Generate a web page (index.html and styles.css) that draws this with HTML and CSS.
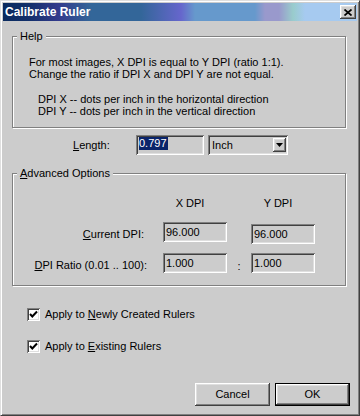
FILE: index.html
```html
<!DOCTYPE html>
<html lang="en">
<head>
  <meta charset="UTF-8">
  <title>Calibrate Ruler</title>
  <link rel="stylesheet" href="styles.css">
</head>
<body>

<div class="window">
  <div class="titlebar">
    <span class="title">Calibrate Ruler</span>
    <span class="close">
      <svg width="8" height="7" viewBox="0 0 8 7"><path d="M0.5 0.5 L7.5 6.5 M7.5 0.5 L0.5 6.5" stroke="#000" stroke-width="1.7" fill="none"/></svg>
    </span>
  </div>

  <div class="content">
    <fieldset class="group help">
      <legend>Help</legend>
      <p>For most images, X DPI is equal to Y DPI (ratio 1:1).<br>Change the ratio if DPI X and DPI Y are not equal.</p>
      <p class="indent">DPI X -- dots per inch in the horizontal direction<br>DPI Y -- dots per inch in the vertical direction</p>
    </fieldset>

    <div class="length-row">
      <label class="length-label"><u>L</u>ength:</label>
      <span class="field length-field"><span class="selected">0.797</span></span>
      <span class="field combo">
        <span class="combo-text">Inch</span>
        <span class="combo-btn">
          <svg width="7" height="4" viewBox="0 0 7 4"><path d="M0 0 H7 L3.5 4 Z" fill="#000"/></svg>
        </span>
      </span>
    </div>

    <fieldset class="group advanced">
      <legend><u>A</u>dvanced Options</legend>
      <div class="dpi-grid">
        <span></span>
        <span class="head">X DPI</span>
        <span></span>
        <span class="head">Y DPI</span>

        <label class="row-label current"><u>C</u>urrent DPI:</label>
        <span class="field value">96.000</span>
        <span></span>
        <span class="field value low">96.000</span>

        <label class="row-label"><u>D</u>PI Ratio (0.01 .. 100):</label>
        <span class="field value">1.000</span>
        <span class="colon">:</span>
        <span class="field value">1.000</span>
      </div>
    </fieldset>

    <div class="checks">
      <div class="check-row">
        <span class="checkbox"><svg width="9" height="9" viewBox="0 0 9 9"><path d="M1 4 L3.3 6.5 L8 1.5" stroke="#000" stroke-width="2" fill="none"/></svg></span>
        <span>Apply to <u>N</u>ewly Created Rulers</span>
      </div>
      <div class="check-row">
        <span class="checkbox"><svg width="9" height="9" viewBox="0 0 9 9"><path d="M1 4 L3.3 6.5 L8 1.5" stroke="#000" stroke-width="2" fill="none"/></svg></span>
        <span>Apply to <u>E</u>xisting Rulers</span>
      </div>
    </div>

    <div class="buttons">
      <button class="btn">Cancel</button>
      <button class="btn default">OK</button>
    </div>
  </div>
</div>

</body>
</html>
```

FILE: styles.css
```css
* { box-sizing: border-box; }
body { margin: 0; font-family: "Liberation Sans", Arial, sans-serif; font-size: 11px; line-height: 13px; color: #000; background: #ccc; }
u { text-decoration: underline; text-underline-offset: 1px; }

.window { width: 360px; height: 416px; background: #ccc; padding: 2px; display: flex; flex-direction: column;
  border: 1px solid; border-color: #dfdfdf #404040 #404040 #dfdfdf; box-shadow: inset 1px 1px #fff, inset -1px -1px #808080; }

.titlebar { height: 18px; display: flex; align-items: center; justify-content: space-between; padding: 0 1px 0 2px;
  background: linear-gradient(to right, #0a2a5e 0px, #12306a 25px, #333a8c 55px, #336699 88px, #336699 138px, #6666cc 178px, #6699cc 192px, #6699cc 252px, #9999cc 262px, #9999cc 276px, #99cccc 290px, #a6caf0 302px, #a6caf0 100%); }
.title { color: #fff; font-weight: bold; font-size: 12px; line-height: 14px; }
.close { width: 16px; height: 14px; background: #ccc; display: flex; align-items: center; justify-content: center;
  box-shadow: inset -1px -1px #404040, inset 1px 1px #fff, inset -2px -2px #808080, inset 2px 2px #dfdfdf; }

.content { flex: 1; display: flex; flex-direction: column; padding: 0 11px 7px 9px; }

.group { margin: 0; padding: 0; min-width: 0; border: 1px solid #808080; box-shadow: 1px 1px #fff, inset 1px 1px #fff; }
.group legend { margin-left: 4px; padding: 0 3px; line-height: 13px; background: #ccc; }

.help { margin-top: 9px; }
.help p { margin: 13px 0 0 16px; line-height: 12px; }
.help p.indent { margin: 13px 0 10px 25px; }

.field { background: #ccc; box-shadow: inset 1px 1px #808080, inset -1px -1px #fff, inset 2px 2px #404040, inset -2px -2px #dfdfdf; }

.length-row { display: flex; align-items: center; height: 20px; margin-top: 7px; }
.length-label { width: 63px; margin-left: 61px; }
.length-field { width: 68px; height: 20px; padding: 2px 2px 0 3px; }
.selected { background: #0a246a; color: #fff; padding: 0 1px 0 0; display: inline-block; line-height: 13px; }
.combo { width: 80px; height: 20px; margin-left: 4px; display: flex; align-items: center; padding: 0 2px 0 4px; }
.combo-text { flex: 1; }
.combo-btn { width: 13px; height: 14px; display: flex; align-items: center; justify-content: center; background: #ccc;
  box-shadow: inset -1px -1px #404040, inset 1px 1px #fff, inset -2px -2px #808080, inset 2px 2px #dfdfdf; }

.advanced { margin-top: 12px; }
.dpi-grid { display: grid; grid-template-columns: 150px 64px 24px 64px; grid-template-rows: 14px 20px 20px; row-gap: 11px; margin: 17px 0 12px; }
.head { text-align: center; padding-right: 10px; }
.row-label { text-align: right; padding-right: 16px; align-self: end; margin-bottom: 1px; }
.row-label.current { padding-right: 19px; }
.value { height: 20px; padding: 4px 2px 0 3px; }
.value.low { margin-top: 2px; }
.colon { text-align: center; align-self: end; }

.checks { margin: 22px 0 0 15px; display: flex; flex-direction: column; gap: 19px; }
.check-row { display: flex; align-items: center; gap: 5px; height: 13px; }
.checkbox { width: 13px; height: 13px; background: #fff; display: flex; align-items: center; justify-content: center;
  box-shadow: inset 1px 1px #808080, inset -1px -1px #fff, inset 2px 2px #404040, inset -2px -2px #dfdfdf; }

.buttons { margin-top: auto; margin-right: -4px; display: flex; justify-content: flex-end; gap: 5px; }
.btn { width: 75px; height: 23px; font: inherit; background: #ccc; color: #000; border: 0; padding: 0;
  box-shadow: inset -1px -1px #404040, inset 1px 1px #fff, inset -2px -2px #808080, inset 2px 2px #dfdfdf; }
.btn.default { box-shadow: inset 0 0 0 1px #000, inset -2px -2px #404040, inset 2px 2px #fff, inset -3px -3px #808080, inset 3px 3px #dfdfdf; }
```
